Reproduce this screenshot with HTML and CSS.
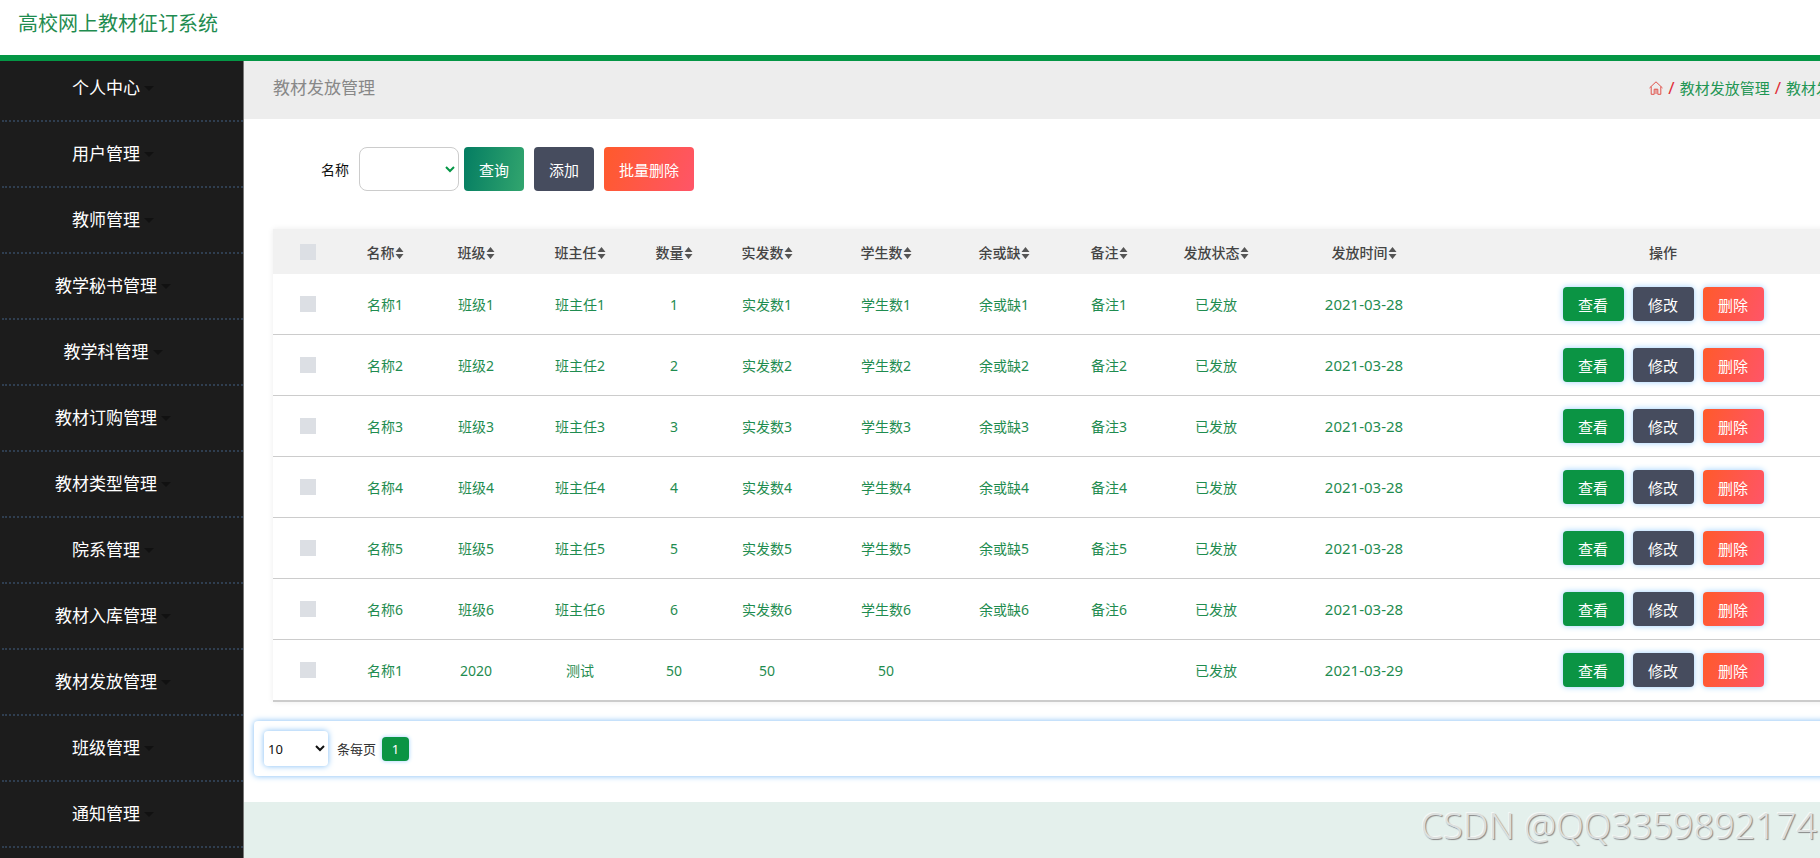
FILE: index.html
```html
<!DOCTYPE html>
<html lang="zh-CN">
<head>
<meta charset="utf-8">
<title>高校网上教材征订系统</title>
<link rel="stylesheet" href="styles.css">
</head>
<body>
<svg class="sprite" aria-hidden="true">
  <symbol id="sort" viewBox="0 0 8 12"><path d="M4 0 8 5H0zM0 7h8L4 12z"/></symbol>
  <symbol id="home" viewBox="0 0 14 14"><path d="M.5 7 7 .8 13.500 7M2.200 5.600V13.300H5.200V8.200H8.800V13.300H11.800V5.600M7 8.200V13" fill="none" stroke="currentColor"/></symbol>
</svg>
<header class="topbar"><h1 class="brand">高校网上教材征订系统</h1></header>
<div class="layout">
  <nav class="sidebar">
    <a class="menu-item" href="#">个人中心</a>
    <a class="menu-item" href="#">用户管理</a>
    <a class="menu-item" href="#">教师管理</a>
    <a class="menu-item" href="#">教学秘书管理</a>
    <a class="menu-item" href="#">教学科管理</a>
    <a class="menu-item" href="#">教材订购管理</a>
    <a class="menu-item" href="#">教材类型管理</a>
    <a class="menu-item" href="#">院系管理</a>
    <a class="menu-item" href="#">教材入库管理</a>
    <a class="menu-item" href="#">教材发放管理</a>
    <a class="menu-item" href="#">班级管理</a>
    <a class="menu-item" href="#">通知管理</a>
  </nav>
  <main class="main">
    <div class="content">
      <div class="page-head">
        <h2 class="page-title">教材发放管理</h2>
        <div class="crumbs">
          <svg class="home"><use href="#home"/></svg><span class="slash">/</span><a href="#">教材发放管理</a><span class="slash">/</span><a href="#">教材发放列表</a>
        </div>
      </div>
      <form class="filters">
        <label class="filter-label" for="name">名称</label>
        <select class="filter-select" id="name"><option></option></select>
        <button class="btn btn-search" type="button">查询</button>
        <button class="btn btn-dark" type="button">添加</button>
        <button class="btn btn-danger" type="button">批量删除</button>
      </form>
      <table class="grid">
        <colgroup><col class="w70"><col class="w84"><col class="w98"><col class="w110"><col class="w78"><col class="w108"><col class="w130"><col class="w106"><col class="w104"><col class="w110"><col class="w186"><col></colgroup>
        <thead>
          <tr>
            <th><input class="check" type="checkbox" aria-label="全选"></th>
            <th>名称<svg class="sort"><use href="#sort"/></svg></th>
            <th>班级<svg class="sort"><use href="#sort"/></svg></th>
            <th>班主任<svg class="sort"><use href="#sort"/></svg></th>
            <th>数量<svg class="sort"><use href="#sort"/></svg></th>
            <th>实发数<svg class="sort"><use href="#sort"/></svg></th>
            <th>学生数<svg class="sort"><use href="#sort"/></svg></th>
            <th>余或缺<svg class="sort"><use href="#sort"/></svg></th>
            <th>备注<svg class="sort"><use href="#sort"/></svg></th>
            <th>发放状态<svg class="sort"><use href="#sort"/></svg></th>
            <th>发放时间<svg class="sort"><use href="#sort"/></svg></th>
            <th>操作</th>
          </tr>
        </thead>
        <tbody>
          <tr><td><input class="check" type="checkbox" aria-label="选择"></td><td>名称1</td><td>班级1</td><td>班主任1</td><td>1</td><td>实发数1</td><td>学生数1</td><td>余或缺1</td><td>备注1</td><td>已发放</td><td class="date">2021-03-28</td><td><div class="ops"><button class="op op-view">查看</button><button class="op btn-dark">修改</button><button class="op btn-danger">删除</button></div></td></tr>
          <tr><td><input class="check" type="checkbox" aria-label="选择"></td><td>名称2</td><td>班级2</td><td>班主任2</td><td>2</td><td>实发数2</td><td>学生数2</td><td>余或缺2</td><td>备注2</td><td>已发放</td><td class="date">2021-03-28</td><td><div class="ops"><button class="op op-view">查看</button><button class="op btn-dark">修改</button><button class="op btn-danger">删除</button></div></td></tr>
          <tr><td><input class="check" type="checkbox" aria-label="选择"></td><td>名称3</td><td>班级3</td><td>班主任3</td><td>3</td><td>实发数3</td><td>学生数3</td><td>余或缺3</td><td>备注3</td><td>已发放</td><td class="date">2021-03-28</td><td><div class="ops"><button class="op op-view">查看</button><button class="op btn-dark">修改</button><button class="op btn-danger">删除</button></div></td></tr>
          <tr><td><input class="check" type="checkbox" aria-label="选择"></td><td>名称4</td><td>班级4</td><td>班主任4</td><td>4</td><td>实发数4</td><td>学生数4</td><td>余或缺4</td><td>备注4</td><td>已发放</td><td class="date">2021-03-28</td><td><div class="ops"><button class="op op-view">查看</button><button class="op btn-dark">修改</button><button class="op btn-danger">删除</button></div></td></tr>
          <tr><td><input class="check" type="checkbox" aria-label="选择"></td><td>名称5</td><td>班级5</td><td>班主任5</td><td>5</td><td>实发数5</td><td>学生数5</td><td>余或缺5</td><td>备注5</td><td>已发放</td><td class="date">2021-03-28</td><td><div class="ops"><button class="op op-view">查看</button><button class="op btn-dark">修改</button><button class="op btn-danger">删除</button></div></td></tr>
          <tr><td><input class="check" type="checkbox" aria-label="选择"></td><td>名称6</td><td>班级6</td><td>班主任6</td><td>6</td><td>实发数6</td><td>学生数6</td><td>余或缺6</td><td>备注6</td><td>已发放</td><td class="date">2021-03-28</td><td><div class="ops"><button class="op op-view">查看</button><button class="op btn-dark">修改</button><button class="op btn-danger">删除</button></div></td></tr>
          <tr><td><input class="check" type="checkbox" aria-label="选择"></td><td>名称1</td><td>2020</td><td>测试</td><td>50</td><td>50</td><td>50</td><td></td><td></td><td>已发放</td><td class="date">2021-03-29</td><td><div class="ops"><button class="op op-view">查看</button><button class="op btn-dark">修改</button><button class="op btn-danger">删除</button></div></td></tr>
        </tbody>
      </table>
      <div class="pager">
        <select class="page-size" id="size"><option>10</option></select>
        <label class="page-label" for="size">条每页</label>
        <button class="page-num" type="button">1</button>
      </div>
    </div>
  </main>
</div>
<div class="watermark">CSDN @QQ3359892174</div>
</body>
</html>
```

FILE: styles.css
```css
* { box-sizing: border-box; }
body {
  margin: 0;
  height: 100vh;
  display: flex;
  flex-direction: column;
  overflow: hidden;
  position: relative;
  background: #e4f0ec;
  font-family: "Noto Sans", "Noto Sans CJK SC", sans-serif;
  font-size: 14px;
}
button, select { font-family: inherit; }
a { color: inherit; text-decoration: none; }
.sprite { position: absolute; width: 0; height: 0; }

.topbar {
  flex: none;
  background: #fff;
  border-bottom: 6px solid #049645;
  padding: 9px 18px 16px;
}
.brand { margin: 0; font-size: 20px; line-height: 30px; font-weight: 400; color: #1f8c50; }

.layout { flex: 1; display: flex; min-height: 0; }
.sidebar {
  flex: none;
  width: 244px;
  padding-left: 2px;
  background: #1c1c1c;
  border-right: 1px solid #777;
  overflow: hidden;
}
.menu-item {
  display: flex;
  align-items: center;
  justify-content: center;
  gap: 4px;
  height: 66px;
  padding: 0 19px 0 0;
  border-bottom: 2px dotted #2f3e50;
  color: #fff;
  font-size: 17px;
  line-height: 24px;
}
.menu-item:first-child { height: 61px; padding-bottom: 5px; }
.menu-item::after {
  content: "";
  border: 5px solid transparent;
  border-top-color: #111;
  border-bottom: 0;
}

.main { flex: 1; min-width: 0; overflow: hidden; }
.content { width: calc(100% + 78px); background: #fff; padding-bottom: 26px; }
.page-head {
  display: flex;
  justify-content: space-between;
  align-items: center;
  background: #ededed;
  padding: 14px 22px 18px 29px;
  line-height: 26px;
}
.page-title { margin: 0; font-size: 17px; font-weight: 400; color: #888; }
.crumbs { display: flex; align-items: center; gap: 5px; font-size: 15px; color: #1f9654; }
.home { width: 14px; height: 14px; color: #e0524a; }
.slash { color: #e02f3a; font-size: 17px; }

.filters { display: flex; align-items: center; padding: 28px 77px 38px; }
.filter-label { margin-right: 10px; color: #111; }
.filter-select {
  width: 100px;
  height: 44px;
  margin-right: 5px;
  border: 1px solid #ccc;
  border-radius: 8px;
  background: #fff;
  color: #049645;
}
.btn {
  height: 44px;
  margin-right: 10px;
  padding: 0 15px;
  border: 0;
  border-radius: 4px;
  color: #fff;
  font-size: 15px;
}
.btn-search { background: linear-gradient(100deg, #047d62, #32a56e); }
.btn-dark { background: #464c5e; }
.btn-danger { background: linear-gradient(110deg, #ff5a2b, #ff5568); }

.grid {
  width: calc(100% - 58px);
  margin: 0 29px;
  table-layout: fixed;
  border-collapse: separate;
  border-spacing: 0;
  border-bottom: 1px solid #ccc;
  box-shadow: 0 0 6px rgba(0, 0, 0, 0.08);
}
.w70 { width: 70px; }
.w78 { width: 78px; }
.w84 { width: 84px; }
.w98 { width: 98px; }
.w104 { width: 104px; }
.w106 { width: 106px; }
.w108 { width: 108px; }
.w110 { width: 110px; }
.w130 { width: 130px; }
.w186 { width: 186px; }
.grid th { height: 45px; padding: 0; background: #f1f1f1; color: #444; font-weight: 500; white-space: nowrap; }
.grid td { height: 61px; padding: 0; border-bottom: 1px solid #ccc; text-align: center; color: #1f8c50; }
.grid .date { font-size: 15px; }
.sort { width: 9px; height: 12px; fill: #555; vertical-align: -1px; }
.check { appearance: none; display: block; width: 16px; height: 16px; margin: 0 auto; background: #dcdfe4; }
.ops { display: flex; justify-content: center; gap: 9px; }
.op {
  width: 61px;
  height: 34px;
  padding: 0;
  border: 0;
  border-radius: 4px;
  color: #fff;
  font-size: 15px;
  box-shadow: 0 0 6px #9cd0ff;
}
.op-view { background: #0b9444; }

.pager {
  display: flex;
  align-items: center;
  margin: 19px 10px 0;
  padding: 10px;
  border-radius: 4px;
  box-shadow: 0 0 6px #7dbcf5;
  font-size: 13px;
}
.page-size {
  width: 64px;
  height: 35px;
  border: 0;
  border-radius: 4px;
  background: #fff;
  box-shadow: 0 0 6px #7dbcf5;
  color: #111;
  font-size: 13px;
}
.page-label { margin: 0 6px 0 9px; color: #333; }
.page-num {
  width: 27px;
  height: 24px;
  padding: 0;
  border: 0;
  border-radius: 4px;
  background: #0b9444;
  box-shadow: 0 0 4px #9cd0ff;
  color: #fff;
  font-size: 13px;
}
.watermark {
  position: absolute;
  right: 3px;
  bottom: 8px;
  font-family: "Noto Sans", sans-serif;
  font-size: 36px;
  line-height: 48px;
  font-weight: 300;
  color: #dcdfde;
  text-shadow: 1px 1px 1px #888, -1px -1px 0 #f4f8f6;
}
```
